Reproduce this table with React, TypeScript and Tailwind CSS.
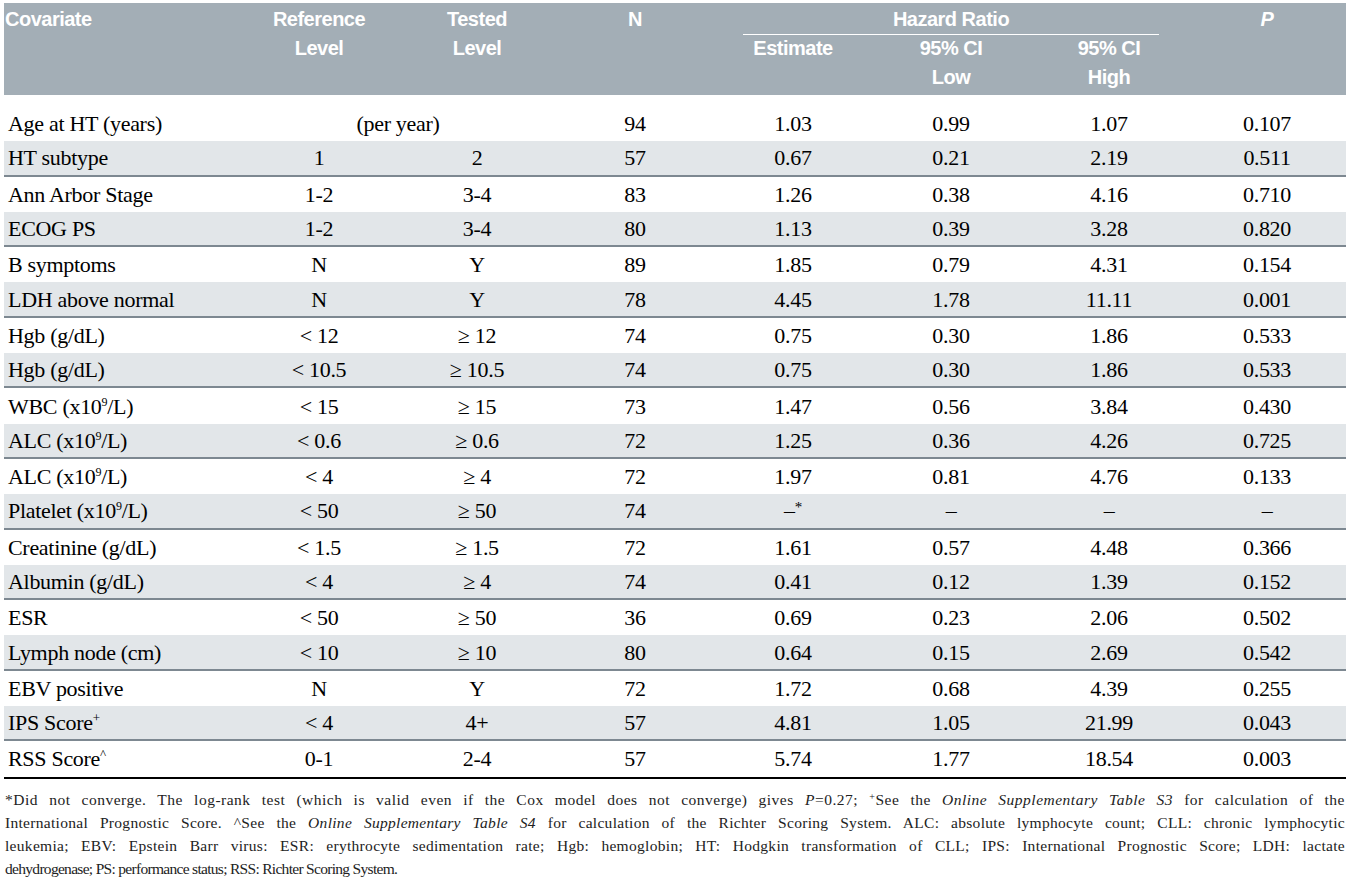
import React from 'react';

type Row = {
    covariate: React.ReactNode;
    ref?: string;
    tested?: string;
    span?: string;
    n: string;
    est: React.ReactNode;
    low: string;
    high: string;
    p: string;
};

const x109 = (label: string) => (
    <>
        {label} (x10<sup className="text-[12px] leading-none -top-[8px]">9</sup>/L)
    </>
);

const rows: Row[] = [
    { covariate: 'Age at HT (years)', span: '(per year)', n: '94', est: '1.03', low: '0.99', high: '1.07', p: '0.107' },
    { covariate: 'HT subtype', ref: '1', tested: '2', n: '57', est: '0.67', low: '0.21', high: '2.19', p: '0.511' },
    { covariate: 'Ann Arbor Stage', ref: '1-2', tested: '3-4', n: '83', est: '1.26', low: '0.38', high: '4.16', p: '0.710' },
    { covariate: 'ECOG PS', ref: '1-2', tested: '3-4', n: '80', est: '1.13', low: '0.39', high: '3.28', p: '0.820' },
    { covariate: 'B symptoms', ref: 'N', tested: 'Y', n: '89', est: '1.85', low: '0.79', high: '4.31', p: '0.154' },
    { covariate: 'LDH above normal', ref: 'N', tested: 'Y', n: '78', est: '4.45', low: '1.78', high: '11.11', p: '0.001' },
    { covariate: 'Hgb (g/dL)', ref: '< 12', tested: '≥ 12', n: '74', est: '0.75', low: '0.30', high: '1.86', p: '0.533' },
    { covariate: 'Hgb (g/dL)', ref: '< 10.5', tested: '≥ 10.5', n: '74', est: '0.75', low: '0.30', high: '1.86', p: '0.533' },
    { covariate: x109('WBC'), ref: '< 15', tested: '≥ 15', n: '73', est: '1.47', low: '0.56', high: '3.84', p: '0.430' },
    { covariate: x109('ALC'), ref: '< 0.6', tested: '≥ 0.6', n: '72', est: '1.25', low: '0.36', high: '4.26', p: '0.725' },
    { covariate: x109('ALC'), ref: '< 4', tested: '≥ 4', n: '72', est: '1.97', low: '0.81', high: '4.76', p: '0.133' },
    {
        covariate: x109('Platelet'),
        ref: '< 50',
        tested: '≥ 50',
        n: '74',
        est: (
            <>
                –<sup className="text-[15px] leading-none -top-[6px]">*</sup>
            </>
        ),
        low: '–',
        high: '–',
        p: '–'
    },
    { covariate: 'Creatinine (g/dL)', ref: '< 1.5', tested: '≥ 1.5', n: '72', est: '1.61', low: '0.57', high: '4.48', p: '0.366' },
    { covariate: 'Albumin (g/dL)', ref: '< 4', tested: '≥ 4', n: '74', est: '0.41', low: '0.12', high: '1.39', p: '0.152' },
    { covariate: 'ESR', ref: '< 50', tested: '≥ 50', n: '36', est: '0.69', low: '0.23', high: '2.06', p: '0.502' },
    { covariate: 'Lymph node (cm)', ref: '< 10', tested: '≥ 10', n: '80', est: '0.64', low: '0.15', high: '2.69', p: '0.542' },
    { covariate: 'EBV positive', ref: 'N', tested: 'Y', n: '72', est: '1.72', low: '0.68', high: '4.39', p: '0.255' },
    {
        covariate: (
            <>
                IPS Score<sup className="text-[13px] leading-none -top-[8px]">+</sup>
            </>
        ),
        ref: '< 4',
        tested: '4+',
        n: '57',
        est: '4.81',
        low: '1.05',
        high: '21.99',
        p: '0.043'
    },
    {
        covariate: (
            <>
                RSS Score<sup className="text-[13px] leading-none -top-[8px]">^</sup>
            </>
        ),
        ref: '0-1',
        tested: '2-4',
        n: '57',
        est: '5.74',
        low: '1.77',
        high: '18.54',
        p: '0.003'
    }
];

const cols = 'grid grid-cols-[236px_repeat(7,158px)]';
const headFont = "font-['Liberation_Sans',Arial,sans-serif] font-bold text-white text-[20px] tracking-[-0.5px] leading-[29px]";

export default function App() {
    return (
        <div className="w-[1350px] min-h-[879px] bg-white pt-[3px] px-[4px] font-['Liberation_Serif',serif] text-black">
            {/* header */}
            <div className={`${cols} ${headFont} h-[92px] bg-[#a3aeb6] grid-rows-[31px_1fr]`}>
                <div className="row-span-2 pl-[1px] pt-[2px]">Covariate</div>
                <div className="row-span-2 pt-[2px] text-center">
                    Reference
                    <br />
                    Level
                </div>
                <div className="row-span-2 pt-[2px] text-center">
                    Tested
                    <br />
                    Level
                </div>
                <div className="row-span-2 pt-[2px] text-center">N</div>
                <div className="col-span-3 pt-[2px] px-[29px]">
                    <div className="text-center border-b-[1.5px] border-white h-[30px]">Hazard Ratio</div>
                </div>
                <div className="row-span-2 col-start-8 row-start-1 pt-[2px] text-center italic">P</div>
                <div className="text-center">Estimate</div>
                <div className="text-center">
                    95% CI
                    <br />
                    Low
                </div>
                <div className="text-center">
                    95% CI
                    <br />
                    High
                </div>
            </div>

            {/* body */}
            <div className="mt-[11px] border-b-2 border-black text-[22px] tracking-[-0.3px]">
                {rows.map((r, i) => {
                    const shaded = i % 2 === 1;
                    return (
                        <div
                            key={i}
                            className={`${cols} items-center box-border h-[35.3px] ${shaded ? 'bg-[#e2e6e9] border-b-2 border-[#7d8891]' : ''}`}
                        >
                            <div className="pl-[4px] whitespace-nowrap">{r.covariate}</div>
                            {r.span ? (
                                <div className="col-span-2 text-center">{r.span}</div>
                            ) : (
                                <>
                                    <div className="text-center">{r.ref}</div>
                                    <div className="text-center">{r.tested}</div>
                                </>
                            )}
                            <div className="text-center">{r.n}</div>
                            <div className="text-center">{r.est}</div>
                            <div className="text-center">{r.low}</div>
                            <div className="text-center">{r.high}</div>
                            <div className="text-center">{r.p}</div>
                        </div>
                    );
                })}
            </div>

            {/* footnote */}
            <div className="mt-[9px] px-[1px] text-[15.5px] leading-[23px] text-[#222]">
                <p className="text-justify [text-align-last:justify] tracking-[0.5px]">
                    *Did not converge. The log-rank test (which is valid even if the Cox model does not converge) gives <i>P</i>=0.27; <sup className="text-[10px]">+</sup>See the{' '}
                    <i>Online Supplementary Table S3</i> for calculation of the
                </p>
                <p className="text-justify [text-align-last:justify] tracking-[0.3px]">
                    International Prognostic Score. ^See the <i>Online Supplementary Table S4</i> for calculation of the Richter Scoring System. ALC: absolute lymphocyte count; CLL: chronic lymphocytic
                </p>
                <p className="text-justify [text-align-last:justify] tracking-[0.3px]">
                    leukemia; EBV: Epstein Barr virus: ESR: erythrocyte sedimentation rate; Hgb: hemoglobin; HT: Hodgkin transformation of CLL; IPS: International Prognostic Score; LDH: lactate
                </p>
                <p className="tracking-[-0.7px]">dehydrogenase; PS: performance status; RSS: Richter Scoring System.</p>
            </div>
        </div>
    );
}
